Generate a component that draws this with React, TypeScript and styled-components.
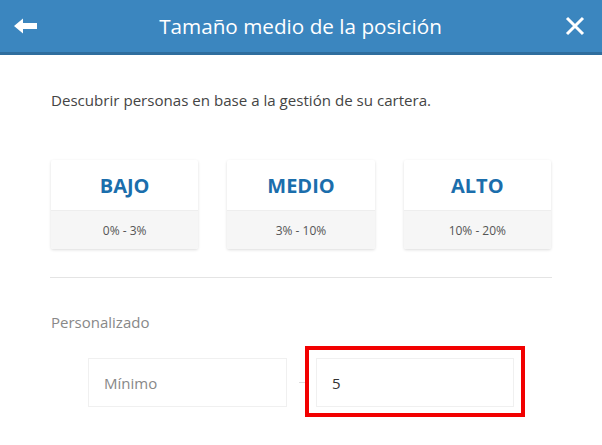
import styled, { createGlobalStyle } from 'styled-components';

const GlobalStyle = createGlobalStyle`
  html, body {
    margin: 0;
    padding: 0;
    background: #ffffff;
    font-family: "Open Sans", "Liberation Sans", sans-serif;
  }
`;

type Level = {
  name: string;
  range: string;
};

const levels: Level[] = [
  { name: 'BAJO', range: '0% - 3%' },
  { name: 'MEDIO', range: '3% - 10%' },
  { name: 'ALTO', range: '10% - 20%' },
];

const Page = styled.div`
  min-height: 100vh;
  background: #ffffff;
`;

// Header is the blue top bar with back and close buttons.
const Header = styled.header`
  display: flex;
  align-items: center;
  justify-content: space-between;
  height: 52px;
  padding: 0 14px 0 13px;
  background: #3b86bf;
  border-bottom: 3px solid #2f6e9e;
  color: #ffffff;
`;

const Title = styled.h1`
  margin: 0;
  font-size: 20.7px;
  font-weight: 400;
`;

const IconButton = styled.button`
  display: flex;
  align-items: center;
  justify-content: center;
  width: 26px;
  height: 26px;
  padding: 0;
  border: 0;
  background: none;
  color: #ffffff;
`;

const Body = styled.main`
  padding: 35px 51px 0;
`;

const Intro = styled.p`
  margin: 0;
  font-size: 15.1px;
  line-height: 20px;
  color: #444444;
`;

const Cards = styled.div`
  display: grid;
  grid-template-columns: repeat(3, 1fr);
  gap: 29px;
  margin-top: 50px;
`;

const Card = styled.div`
  display: flex;
  flex-direction: column;
  height: 89px;
  background: #ffffff;
  border-radius: 2px;
  box-shadow: 0 1px 3px rgba(0, 0, 0, 0.14);
  overflow: hidden;
`;

const CardName = styled.div`
  display: flex;
  align-items: center;
  justify-content: center;
  height: 50px;
  font-size: 20px;
  font-weight: 700;
  color: #1b6eac;
`;

const CardRange = styled.div`
  display: flex;
  flex: 1;
  align-items: center;
  justify-content: center;
  background: #f6f6f6;
  border-top: 1px solid #eeeeee;
  font-size: 12px;
  color: #555555;
`;

const Divider = styled.hr`
  margin: 28px -1px 0;
  border: 0;
  border-top: 1px solid #e4e4e4;
`;

const Label = styled.div`
  margin-top: 34px;
  font-size: 15px;
  line-height: 20px;
  color: #888888;
`;

const RangeRow = styled.div`
  display: grid;
  grid-template-columns: 199px 29px 198px;
  align-items: center;
  justify-content: center;
  margin-top: 26px;
`;

const Field = styled.div<{ $placeholder?: boolean }>`
  position: relative;
  display: flex;
  align-items: center;
  height: 47px;
  padding: 0 15px;
  border: 1px solid #f0f0f0;
  font-size: 15px;
  color: ${(props): string => (props.$placeholder ? '#888888' : '#333333')};
`;

const Dash = styled.span`
  justify-self: center;
  width: 6px;
  height: 1px;
  background: #dddddd;
`;

// Highlight is the red annotation drawn over the second field.
const Highlight = styled.span`
  position: absolute;
  top: -13px;
  left: -12px;
  right: -12px;
  bottom: -11px;
  border: 4px solid #f20000;
`;

const App = (): JSX.Element => (
  <Page>
    <GlobalStyle />
    <Header>
      <IconButton aria-label="back">
        <svg width="24" height="16" viewBox="0 0 24 16">
          <path d="M0 8 L9 0.5 L9 5 L23 5 L23 11 L9 11 L9 15.5 Z" fill="#ffffff" />
        </svg>
      </IconButton>
      <Title>Tamaño medio de la posición</Title>
      <IconButton aria-label="close">
        <svg width="20" height="20" viewBox="0 0 20 20">
          <path d="M2 2 L18 18 M18 2 L2 18" stroke="#ffffff" strokeWidth="3" />
        </svg>
      </IconButton>
    </Header>
    <Body>
      <Intro>Descubrir personas en base a la gestión de su cartera.</Intro>
      <Cards>
        {levels.map((level) => (
          <Card key={level.name}>
            <CardName>{level.name}</CardName>
            <CardRange>{level.range}</CardRange>
          </Card>
        ))}
      </Cards>
      <Divider />
      <Label>Personalizado</Label>
      <RangeRow>
        <Field $placeholder>Mínimo</Field>
        <Dash />
        <Field>
          5
          <Highlight />
        </Field>
      </RangeRow>
    </Body>
  </Page>
);

export default App;
